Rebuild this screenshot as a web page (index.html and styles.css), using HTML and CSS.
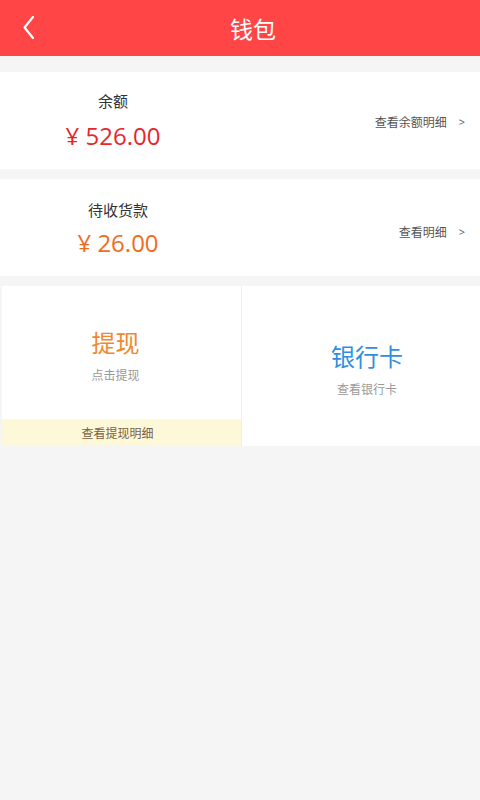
FILE: index.html
```html
<!DOCTYPE html>
<html lang="zh-CN">
<head>
<meta charset="utf-8">
<title>钱包</title>
<link rel="stylesheet" href="styles.css">
</head>
<body>
<header class="topbar">
  <span class="back">
    <svg width="14" height="26" viewBox="0 0 14 26"><path d="M11 2 L2.5 12.5 L11 23" fill="none" stroke="#fff" stroke-width="2.2" stroke-linecap="round" stroke-linejoin="round"/></svg>
  </span>
  <h1 class="title">钱包</h1>
</header>
<main class="content">
  <section class="card">
    <div class="summary summary-balance">
      <div class="label">余额</div>
      <div class="amount amount-red">¥ 526.00</div>
    </div>
    <div class="link"><span>查看余额明细</span><span class="arrow">&gt;</span></div>
  </section>
  <section class="card">
    <div class="summary summary-pending">
      <div class="label">待收货款</div>
      <div class="amount amount-orange">¥ 26.00</div>
    </div>
    <div class="link link-low"><span>查看明细</span><span class="arrow">&gt;</span></div>
  </section>
  <section class="actions">
    <div class="cell cell-withdraw">
      <div class="cell-main">
        <div class="cell-title title-orange">提现</div>
        <div class="cell-sub">点击提现</div>
      </div>
      <div class="cell-foot">查看提现明细</div>
    </div>
    <div class="cell cell-bank">
      <div class="cell-title title-blue">银行卡</div>
      <div class="cell-sub">查看银行卡</div>
    </div>
  </section>
</main>
</body>
</html>
```
FILE: styles.css
```css
* { box-sizing: border-box; }
html, body { margin: 0; padding: 0; }
body {
  width: 480px;
  min-height: 800px;
  background: #f5f5f5;
  font-family: "Noto Sans CJK SC", "Noto Sans", sans-serif;
  color: #333;
}
.topbar {
  height: 56px;
  background: #ff4545;
  display: flex;
  align-items: center;
  justify-content: center;
  position: relative;
}
.back {
  position: absolute;
  left: 22px;
  top: 15px;
  display: block;
  width: 14px;
  height: 26px;
}
.back svg { display: block; }
.title {
  margin: 0 0 0 26px;
  font-size: 23px;
  font-weight: 400;
  color: #fff;
  line-height: 56px;
}
.content {
  padding-top: 16px;
  display: flex;
  flex-direction: column;
  gap: 10px;
}
.card {
  background: #fff;
  height: 97px;
  display: flex;
  align-items: center;
  justify-content: space-between;
  padding-right: 15px;
}
.summary {
  display: flex;
  flex-direction: column;
  align-items: center;
  align-self: flex-start;
  padding-top: 19px;
}
.summary-balance { width: 226px; }
.summary-pending { width: 236px; padding-top: 21px; }
.label {
  font-size: 15px;
  line-height: 20px;
  color: #333;
}
.amount {
  margin-top: 9px;
  font-family: "Open Sans", "Noto Sans", sans-serif;
  font-size: 24px;
  line-height: 32px;
}
.summary-pending .amount { margin-top: 7px; }
.amount-red { color: #e8262a; }
.amount-orange { color: #ef6c1c; }
.link {
  font-size: 12px;
  color: #555;
  display: flex;
  align-items: center;
  gap: 12px;
  margin-top: 2px;
}
.link-low { margin-top: 8px; }
.arrow {
  font-family: "Open Sans", sans-serif;
  font-size: 11px;
  color: #555;
}
.actions {
  display: flex;
  height: 160px;
  padding-left: 2px;
}
.cell {
  background: #fff;
  display: flex;
  flex-direction: column;
}
.cell-withdraw {
  width: 240px;
  border-right: 1px solid #eeeeee;
}
.cell-main {
  flex: 1;
  display: flex;
  flex-direction: column;
  align-items: center;
  justify-content: center;
  padding-top: 4px;
  padding-right: 12px;
}
.cell-foot {
  height: 27px;
  background: #fdf9d8;
  font-size: 12px;
  line-height: 27px;
  text-align: center;
  color: #7a6044;
  padding-right: 8px;
}
.cell-bank {
  flex: 1;
  align-items: center;
  justify-content: center;
  padding-top: 6px;
  padding-left: 12px;
}
.cell-title {
  font-size: 24px;
  line-height: 32px;
}
.title-orange { color: #f0892e; }
.title-blue { color: #2f8fde; }
.cell-sub {
  margin-top: 8px;
  font-size: 12px;
  line-height: 18px;
  color: #999;
}
```
